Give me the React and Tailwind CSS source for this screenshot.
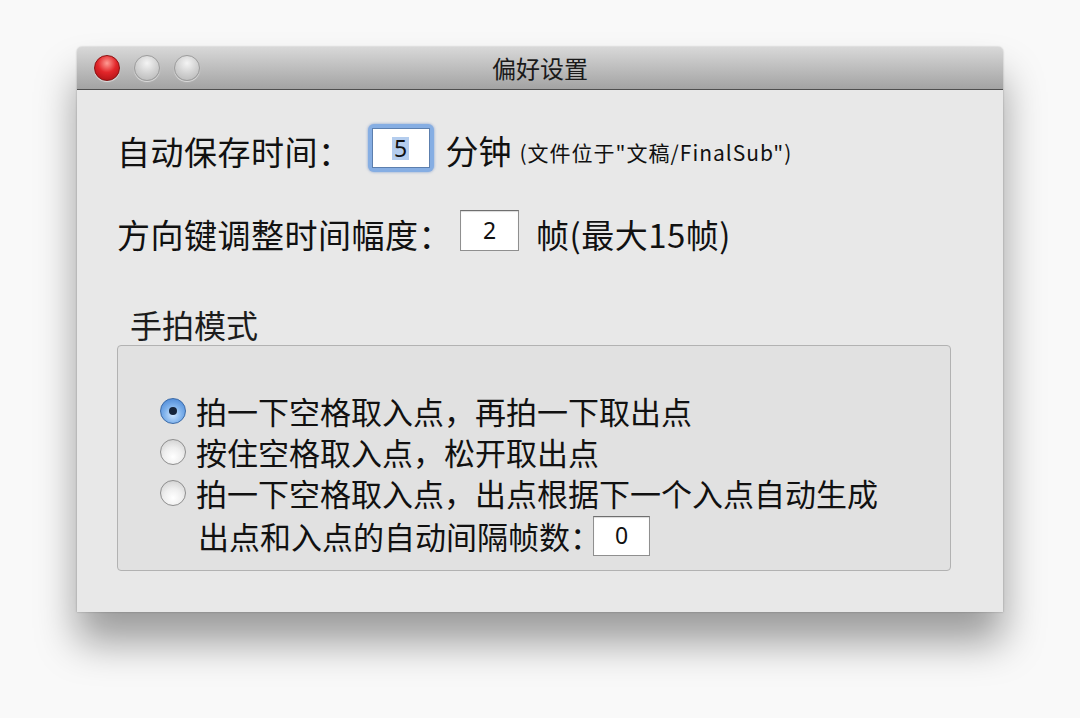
import React from 'react';

// 偏好设置 window, Mac OS X Leopard style

const TrafficLight = ({ red }) => (
  <span
    className={
      red
        ? 'block h-[26px] w-[26px] rounded-full border border-[#8c1010] bg-[radial-gradient(circle_at_50%_30%,#ff9c94_0%,#e2262a_45%,#a30d10_100%)] shadow-[0_1px_1px_rgba(255,255,255,0.6)]'
        : 'block h-[26px] w-[26px] rounded-full border border-[#9c9c9c] bg-[radial-gradient(circle_at_50%_30%,#f4f4f4_0%,#d2d2d2_50%,#b4b4b4_100%)] shadow-[0_1px_1px_rgba(255,255,255,0.6)]'
    }
  />
);

const Radio = ({ checked }) =>
  checked ? (
    <span className="flex h-[26px] w-[26px] shrink-0 items-center justify-center rounded-full border border-[#3a6aa8] bg-[radial-gradient(circle_at_50%_65%,#cfe6ff_0%,#7fb2ec_45%,#3c7bcf_100%)]">
      <span className="block h-[8px] w-[8px] rounded-full bg-[#16243a]" />
    </span>
  ) : (
    <span className="block h-[26px] w-[26px] shrink-0 rounded-full border border-[#8e8e8e] bg-[radial-gradient(circle_at_50%_70%,#ffffff_0%,#eeeeee_45%,#c9c9c9_100%)]" />
  );

const NumBox = ({ value, className }) => (
  <div
    className={`flex items-center justify-center border border-[#8f8f8f] border-t-[#6f6f6f] bg-white font-['Noto_Sans',sans-serif] text-[23px] text-[#111] shadow-[inset_0_1px_1px_rgba(0,0,0,0.15)] ${className}`}
  >
    {value}
  </div>
);

const App = () => {
  return (
    <div className="min-h-screen bg-[#f9f9f9] pl-[77px] pt-[47px] font-['Noto_Sans_CJK_SC',sans-serif] text-[#111]">
      <div className="flex h-[565px] w-[926px] flex-col rounded-t-[5px] bg-[#e8e8e8] shadow-[0_30px_40px_rgba(0,0,0,0.38),0_0_2px_rgba(0,0,0,0.3)]">
        {/* title bar */}
        <div className="grid h-[43px] grid-cols-[1fr_auto_1fr] items-center rounded-t-[5px] border-b border-[#4e4e4e] bg-[linear-gradient(#d8d8d8,#a3a3a3)] px-[17px]">
          <div className="flex items-center gap-[14px]">
            <TrafficLight red />
            <TrafficLight />
            <TrafficLight />
          </div>
          <div className="text-[24px] leading-none text-[#1a1a1a]">偏好设置</div>
          <div />
        </div>

        {/* body */}
        <div className="flex flex-col px-[40px]">
          <div className="mt-[34px] flex h-[48px] items-center text-[33px] leading-none">
            <span className="pt-[6px] tracking-[0.5px]">自动保存时间：</span>
            <div className="ml-[16px] rounded-[6px] bg-[#86aee3] p-[4px] shadow-[0_0_3px_rgba(60,110,190,0.6)]">
              <div className="flex h-[40px] w-[58px] items-center justify-center border border-[#5c7fae] bg-white font-['Noto_Sans',sans-serif] text-[23px] text-[#111]">
                <span className="bg-[#b4cdee] px-[2px]">5</span>
              </div>
            </div>
            <span className="ml-[12px] pt-[4px]">分钟</span>
            <span className="ml-[8px] pt-[8px] text-[21px] tracking-[1px]">(文件位于"文稿/FinalSub")</span>
          </div>

          <div className="mt-[38px] flex h-[41px] items-center text-[33px] leading-none">
            <span className="pt-[8px] tracking-[0.5px]">方向键调整时间幅度：</span>
            <NumBox value="2" className="ml-[8px] h-[41px] w-[59px]" />
            <span className="ml-[17px] pt-[8px] tracking-[0.5px]">帧(最大15帧)</span>
          </div>

          <div className="mt-[57px] ml-[13px] text-[32px] leading-none text-[#1c1c1c]">手拍模式</div>

          <div className="mt-[5px] flex h-[226px] w-[834px] flex-col rounded-[4px] border border-[#b2b2b2] bg-[#e1e1e1] pl-[42px] pt-[44px] text-[31px] leading-none">
            <div className="flex h-[41px] items-center gap-[10px]">
              <Radio checked />
              <span>拍一下空格取入点，再拍一下取出点</span>
            </div>
            <div className="flex h-[41px] items-center gap-[10px]">
              <Radio />
              <span>按住空格取入点，松开取出点</span>
            </div>
            <div className="flex h-[41px] items-center gap-[10px]">
              <Radio />
              <span>拍一下空格取入点，出点根据下一个入点自动生成</span>
            </div>
            <div className="mt-[2px] flex h-[41px] items-center pl-[38px]">
              <span>出点和入点的自动间隔帧数：</span>
              <NumBox value="0" className="ml-[-8px] h-[40px] w-[57px]" />
            </div>
          </div>
        </div>
      </div>
    </div>
  );
};

export default App;
